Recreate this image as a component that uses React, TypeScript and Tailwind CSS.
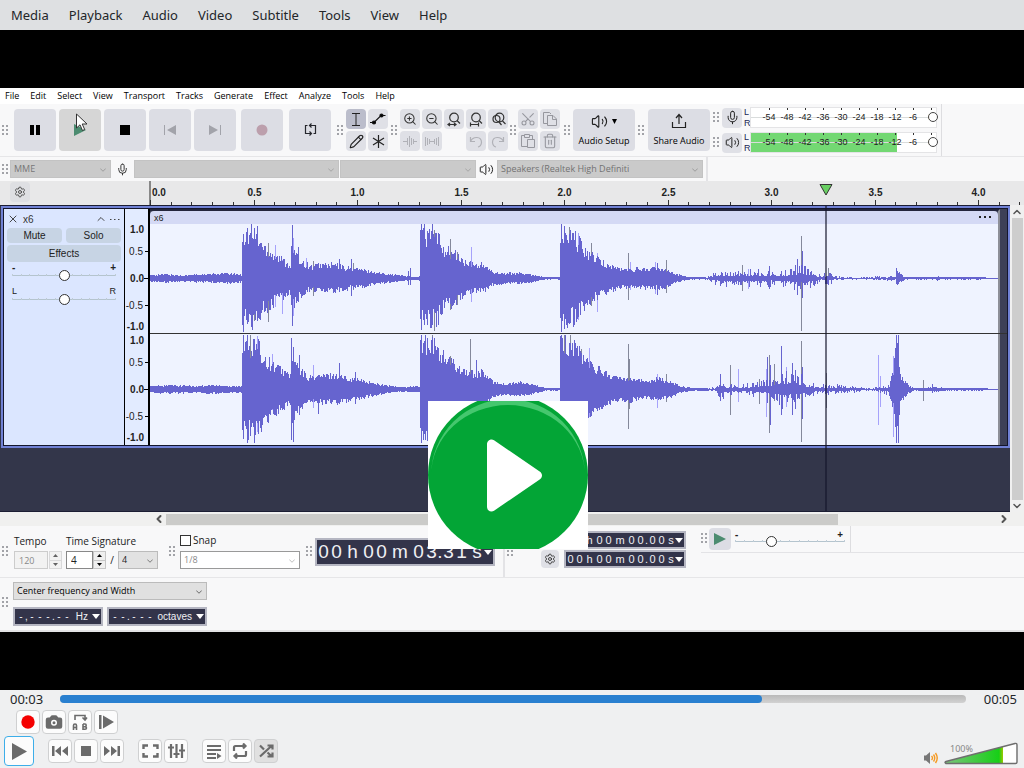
import type { ReactNode } from "react"
import {
    Camera,
    ChevronDown,
    ChevronLeft,
    ChevronRight,
    ChevronUp,
    Mic,
    Pencil,
    Scissors,
    Settings,
    Trash2,
    Volume2,
    X,
    ZoomIn,
    ZoomOut,
} from "lucide-react"

type Point = [number, number]
type Spike = [number, number, number, string?]

const BLUE = "#6664cf"
const GRAY = "#84889b"
const LIGHT = "#a6a2fb"

// [x, amplitude] pairs, in pixels from the start of the clip
const LEFT_ENVELOPE: Point[] = [
    [0, 3], [15, 4], [30, 3], [60, 4], [75, 5], [90, 4], [91, 3], [92, 46], [106, 47], [110, 38], [115, 32],
    [125, 24], [140, 14], [141, 30], [144, 30], [146, 22], [160, 12], [170, 14], [185, 14], [195, 11], [210, 9],
    [225, 6], [240, 4], [250, 3], [265, 1], [269, 2], [270, 46], [286, 44], [295, 30],
    [305, 25], [315, 16], [325, 14], [333, 14], [340, 7], [355, 5], [370, 5], [385, 3], [395, 1], [409, 1],
    [410, 46], [425, 42], [435, 29], [450, 17], [465, 11], [475, 9], [490, 10], [510, 10], [518, 9], [525, 4],
    [540, 1], [555, 1], [562, 4], [570, 8], [590, 7], [605, 9], [615, 9], [625, 6], [635, 8], [645, 13],
    [655, 12], [662, 8], [670, 3], [678, 7], [685, 2], [710, 1], [740, 2], [745, 1], [747, 8], [750, 4],
    [755, 1], [785, 1], [787, 2], [790, 1], [830, 1], [848, 0],
]
const LEFT_SPIKES: Spike[] = [
    [93, 44, 54], [97, 50, 46], [101, 54, 48], [104, 49, 43, GRAY], [107, 52, 41], [118, 35, 44, GRAY], [125, 33, 29, LIGHT],
    [132, 18, 36, LIGHT], [142, 53, 48], [143, 40, 38, LIGHT], [148, 31, 22], [156, 20, 12, LIGHT], [163, 17, 18, GRAY],
    [189, 19, 14], [201, 19, 18], [203, 15, 12, GRAY], [258, 7, 7], [260, 10, 7], [271, 54, 52], [274, 54, 47], [282, 54, 40],
    [284, 48, 53, GRAY], [300, 39, 32, GRAY], [307, 26, 27, GRAY], [321, 31, 24, LIGHT], [411, 54, 54], [414, 52, 47],
    [419, 51, 43, GRAY], [428, 45, 42, LIGHT], [441, 35, 28, GRAY], [447, 25, 34, LIGHT], [478, 25, 22, GRAY], [480, 16, 12, LIGHT],
    [505, 16, 16, LIGHT], [507, 15, 17], [516, 18, 15, GRAY], [592, 13, 13, GRAY], [598, 9, 11, LIGHT], [619, 12, 11],
    [647, 19, 17], [651, 42, 53, GRAY], [652, 27, 20], [678, 10, 5, GRAY], [746, 10, 6],
]
const RIGHT_ENVELOPE: Point[] = [
    [0, 3], [20, 4], [45, 3], [60, 4], [90, 3], [91, 3], [92, 44], [106, 48], [112, 36], [120, 27], [132, 20],
    [141, 14], [142, 38], [144, 30], [150, 20], [158, 12], [170, 14], [185, 15], [195, 12], [205, 10], [220, 7],
    [235, 4], [250, 2], [269, 3], [270, 46], [285, 46], [295, 32], [305, 26], [315, 19], [325, 16], [332, 18],
    [342, 8], [355, 5], [370, 7], [385, 4], [395, 1], [409, 1], [410, 48], [424, 48], [435, 31], [450, 20],
    [465, 12], [480, 12], [495, 8], [508, 11], [520, 8], [530, 3], [545, 1], [565, 2], [571, 11], [575, 5],
    [590, 4], [603, 7], [612, 8], [625, 13], [630, 20], [640, 18], [650, 15], [656, 8], [665, 5], [680, 5],
    [700, 3], [720, 1], [735, 4], [739, 6], [743, 20], [746, 54], [748, 52], [750, 14], [757, 5], [763, 1],
    [787, 2], [795, 1], [830, 1], [848, 0],
]
const RIGHT_SPIKES: Spike[] = [
    [93, 54, 50], [97, 54, 54], [100, 54, 46, GRAY], [107, 53, 43, LIGHT], [118, 22, 30], [122, 35, 21, LIGHT],
    [141, 51, 51], [143, 42, 53], [149, 34, 26], [163, 24, 19, LIGHT], [168, 12, 25], [189, 26, 15], [205, 17, 15],
    [271, 54, 54], [275, 54, 51], [282, 54, 44, GRAY], [300, 33, 30, GRAY], [320, 50, 28, GRAY], [326, 29, 20],
    [411, 54, 54], [414, 54, 44, GRAY], [420, 54, 43, GRAY], [431, 40, 32, GRAY], [439, 41, 28, LIGHT], [478, 45, 40, GRAY],
    [479, 30, 20, GRAY], [507, 15, 19, LIGHT], [516, 15, 13, GRAY], [570, 15, 12], [580, 24, 26, GRAY], [588, 20, 13, LIGHT],
    [609, 10, 15, GRAY], [616, 20, 28, LIGHT], [617, 32, 14], [619, 34, 44, GRAY], [620, 24, 36], [624, 25, 12, GRAY], [631, 43, 26],
    [636, 22, 18, LIGHT], [642, 26, 26], [645, 19, 20], [651, 48, 53, GRAY], [652, 22, 30], [676, 16, 19, GRAY],
    [728, 34, 36, LIGHT], [730, 13, 18, LIGHT], [743, 33, 48, LIGHT], [746, 54, 54], [748, 54, 54], [773, 9, 12, GRAY], [782, 5, 4],
]

function noise(n: number) {
    const v = Math.sin(n * 127.1) * 43758.5453
    return v - Math.floor(v)
}

function amplitudeAt(points: Point[], x: number) {
    const next = points.findIndex((p) => p[0] >= x)
    if (next <= 0) return points[0][1]
    const [x0, a0] = points[next - 1]
    const [x1, a1] = points[next]
    return a0 + ((a1 - a0) * (x - x0)) / (x1 - x0)
}

// the tail of the clip is quiet speech, far more jagged than the hits before it
function jitter(x: number, n: number) {
    return x > 555 && x < 740 ? 0.25 + 0.9 * n * n : 0.65 + 0.5 * n
}

function barsPath(points: Point[], seed: number) {
    let d = ""
    for (let x = 0; x < 848; x++) {
        const a = amplitudeAt(points, x)
        const up = Math.min(54, a * jitter(x, noise(x + seed)))
        const down = Math.min(54, a * jitter(x, noise(x * 3 + seed + 9)))
        d += `M${x + 0.5} ${(55 - up).toFixed(1)}V${(55.5 + down).toFixed(1)}`
    }
    return d
}

interface WaveformProps {
    points: Point[]
    spikes: Spike[]
    seed: number
    top: number
    height: number
}

function Waveform({ points, spikes, seed, top, height }: WaveformProps) {
    return (
        <svg width="848" height={height} viewBox={`0 ${top} 848 ${height}`} className="block bg-[#eff3ff]" shapeRendering="crispEdges">
            {spikes.map(([x, up, down, color]) => (
                <path key={x} d={`M${x + 0.5} ${55 - up}V${55 + down}`} stroke={color ?? BLUE} />
            ))}
            <path d={barsPath(points, seed)} stroke={BLUE} />
            <path d="M0 55.5H848" stroke={BLUE} strokeOpacity=".7" />
        </svg>
    )
}

function Grip({ className = "" }: { className?: string }) {
    return (
        <svg width="6" height="11" viewBox="0 0 6 11" fill="#a2a3a8" className={`shrink-0 ${className}`}>
            <path d="M0 0h2v2H0zM4 0h2v2H4zM0 4h2v2H0zM4 4h2v2H4zM0 8h2v2H0zM4 8h2v2H4z" />
        </svg>
    )
}

interface ButtonProps {
    label: string
    children?: ReactNode
    className?: string
}

function BigButton({ label, children, className = "bg-[#dcdde4]" }: ButtonProps) {
    return (
        <button aria-label={label} className={`flex h-[42px] w-[42px] shrink-0 items-center justify-center rounded-sm ${className}`}>
            {children}
        </button>
    )
}

function SmallButton({ label, children, className = "bg-[#dfe0e6]" }: ButtonProps) {
    return (
        <button aria-label={label} className={`flex h-5 w-5 shrink-0 items-center justify-center rounded-sm ${className}`}>
            {children}
        </button>
    )
}

interface ComboProps {
    label: string
    value: string
    className: string
}

function Combo({ label, value, className }: ComboProps) {
    return (
        <div className={`relative h-[18px] shrink-0 border text-[9px] ${className}`}>
            <select aria-label={label} className="block h-full w-full appearance-none truncate bg-transparent pl-[3px] pr-3 leading-4">
                <option>{value}</option>
            </select>
            <ChevronDown size={10} strokeWidth={1.8} className="pointer-events-none absolute top-1 right-0.5 opacity-70" />
        </div>
    )
}

function Slider({ label, value, className }: { label: string; value: number; className: string }) {
    return (
        <div className={`relative h-3 ${className}`}>
            <div className="flex h-1.5 justify-between border-b border-[#b4c4ce] pt-1">
                {Array.from({ length: 13 }, (_, i) => (
                    <i key={i} className="h-0.5 w-px bg-[#bfccd6]" />
                ))}
            </div>
            <i className="absolute top-0 -ml-[5px] h-[11px] w-[11px] rounded-full border border-[#333] bg-white" style={{ left: `${value}%` }} />
            <input type="range" aria-label={label} defaultValue={value} className="absolute inset-0 h-full w-full opacity-0" />
        </div>
    )
}

function TransportToolbar() {
    return (
        <div className="flex items-center">
            <Grip className="ml-0.5" />
            <div className="ml-1.5 flex gap-[3px]">
                <BigButton label="Pause">
                    <svg width="10" height="10"><path d="M0 0h4v10H0zM6 0h4v10H6z" /></svg>
                </BigButton>
                <BigButton label="Play" className="bg-[#d6d6d6]">
                    <svg width="12" height="12" fill="#4c8c70"><path d="M0 0L12 6L0 12z" /></svg>
                </BigButton>
                <BigButton label="Stop">
                    <svg width="10" height="10"><path d="M0 0h10v10H0z" /></svg>
                </BigButton>
                <BigButton label="Skip to start">
                    <svg width="12" height="10" fill="#a2a3aa"><path d="M0 0h1v10H0zM12 0v10L3 5z" /></svg>
                </BigButton>
                <BigButton label="Skip to end">
                    <svg width="12" height="10" fill="#a2a3aa"><path d="M11 0h1v10h-1zM0 0v10l9-5z" /></svg>
                </BigButton>
            </div>
            <div className="ml-[5px] flex gap-1.5">
                <BigButton label="Record">
                    <svg width="12" height="12" fill="#bc9fac"><circle cx="6" cy="6" r="5.5" /></svg>
                </BigButton>
                <BigButton label="Loop">
                    <svg width="13" height="14" fill="none" stroke="#26272d" strokeWidth="1.2">
                        <path d="M3.500 2.500H1.500V10.500H7M5.500 2.500H11.500V10.500H9.500M7.500 .5L5.500 2.500L7.500 4.500M5.500 8.500L7.500 10.500L5.500 12.500" />
                    </svg>
                </BigButton>
            </div>
        </div>
    )
}

function ToolButtons() {
    return (
        <div className="ml-[3px] grid grid-cols-2 gap-0.5">
            <SmallButton label="Selection tool" className="bg-[#bbbdcb]">
                <svg width="10" height="15" fill="none" stroke="#222"><path d="M1 1.500h8M1 13.500h8M5 1.500v12" /></svg>
            </SmallButton>
            <SmallButton label="Envelope tool">
                <svg width="16" height="14" stroke="#111" strokeWidth="1.200">
                    <path d="M0 10.500h4L11 3.500h4.500" fill="none" />
                    <circle cx="4" cy="10.500" r="1.500" />
                    <circle cx="11.500" cy="3.500" r="1.500" />
                </svg>
            </SmallButton>
            <SmallButton label="Draw tool"><Pencil size={15} strokeWidth={1.8} color="#222" /></SmallButton>
            <SmallButton label="Multi tool">
                <svg width="13" height="13" stroke="#222" strokeWidth="1.200"><path d="M6.500 0v13M1 3l11 7M12 3L1 10" /></svg>
            </SmallButton>
        </div>
    )
}

function FitIcon({ d }: { d: string }) {
    return (
        <svg width="14" height="15" viewBox="0 0 14 15" fill="none" stroke="#333" strokeWidth="1.200">
            <circle cx="7" cy="5.500" r="4.300" />
            <path d={d} />
        </svg>
    )
}

function ZoomButtons() {
    return (
        <div className="ml-[3px] grid grid-cols-5 gap-0.5">
            <SmallButton label="Zoom in"><ZoomIn size={14} strokeWidth={1.8} color="#333" /></SmallButton>
            <SmallButton label="Zoom out"><ZoomOut size={14} strokeWidth={1.8} color="#333" /></SmallButton>
            <SmallButton label="Fit selection"><FitIcon d="M10 8.500l3 3M1 12.500h8M3 11l-2 1.500l2 1.500M7 11l2 1.500l-2 1.500" /></SmallButton>
            <SmallButton label="Fit project"><FitIcon d="M10 8.500l3 3M1 12.500h8M1.500 10.500v4M9.500 10.500v4" /></SmallButton>
            <SmallButton label="Zoom toggle">
                <svg width="15" height="14" fill="none" stroke="#333" strokeWidth="1.200">
                    <circle cx="8.500" cy="5.500" r="4.300" />
                    <circle cx="5.500" cy="7" r="3.500" />
                    <path d="M8 10l2.500 3M11.500 9l3 3" />
                </svg>
            </SmallButton>
            <SmallButton label="Trim audio">
                <svg width="14" height="11" stroke="#b0b1b7"><path d="M0 5.500h4M4.500 2v7M6.500 0v11M8.500 2v7M10.500 3v5M11 5.500h3" /></svg>
            </SmallButton>
            <SmallButton label="Silence audio">
                <svg width="14" height="11" stroke="#b0b1b7"><path d="M.5 1v9M2.500 2v7M4.500 3v5M5 5.500h4M9.500 3v5M11.500 2v7M13.500 1v9" /></svg>
            </SmallButton>
            <span />
            <SmallButton label="Undo">
                <svg width="14" height="13" fill="none" stroke="#b0b1b7" strokeWidth="1.200"><path d="M1.500 2v4.500H6M1.500 6.500C4 1 12.500 1 12.500 7.500Q12 11.500 9 12" /></svg>
            </SmallButton>
            <SmallButton label="Redo">
                <svg width="14" height="13" fill="none" stroke="#b0b1b7" strokeWidth="1.200"><path d="M12.500 2v4.500H8M12.500 6.500C10 1 1.500 1 1.500 7.500Q2 11.500 5 12" /></svg>
            </SmallButton>
        </div>
    )
}

function EditButtons() {
    return (
        <div className="ml-0.5 grid grid-cols-2 gap-0.5">
            <SmallButton label="Cut"><Scissors size={16} strokeWidth={1.6} color="#96979e" className="-rotate-90" /></SmallButton>
            <SmallButton label="Copy">
                <svg width="16" height="16" fill="none" stroke="#96979e"><path d="M5.500 12.500H1.500V1.500H7.500L9 3M5.500 4.500H11L14.500 8V14.500H5.500zM10.500 4.500V8.500H14.500" /></svg>
            </SmallButton>
            <SmallButton label="Paste">
                <svg width="16" height="16" fill="none" stroke="#96979e"><path d="M7 13.500H1.500V2.500H4.500M9.500 2.500H12.500V6M4.500 1.500H9.500V4.500H4.500zM7.500 6.500H14.500V14.500H7.500z" /></svg>
            </SmallButton>
            <SmallButton label="Delete"><Trash2 size={16} strokeWidth={1.6} color="#96979e" /></SmallButton>
        </div>
    )
}

const levels = ["-54", "-48", "-42", "-36", "-30", "-24", "-18", "-12", "-6", "0"]

function Meter({ label, level, icon }: { label: string; level: number; icon: ReactNode }) {
    return (
        <div className="flex h-[23px] items-center">
            <Grip />
            <SmallButton label={label} className="ml-[3px] bg-[#dfe0e6]">{icon}</SmallButton>
            <div className="ml-0.5 w-1.5 font-['Liberation_Sans',sans-serif] text-[9px] leading-[11px] text-[#222a55]">
                <div>L</div>
                <div>R</div>
            </div>
            <div className="relative h-[21px] w-[187px] border border-[#e4e4e6] bg-white">
                <div className="absolute inset-y-0 left-0 bg-[#73d873]" style={{ width: `${level}%` }} />
                <div className="absolute inset-x-0 top-[9px] h-px bg-[#d9dcdc]" />
                <div className="relative flex pl-[9px] font-['Liberation_Sans',sans-serif] text-[9px] leading-[14px] text-[#222]">
                    {levels.map((db) => (
                        <div key={db} className="flex w-[18px] shrink-0 flex-col items-center">
                            <i className="h-0.5 w-px bg-[#333]" />
                            <span>{db}</span>
                        </div>
                    ))}
                </div>
                <i className="absolute top-1 -right-0.5 h-2.5 w-2.5 rounded-full border border-[#444] bg-white" />
            </div>
        </div>
    )
}

function Toolbars() {
    return (
        <div className="flex h-[53px] items-center overflow-hidden border-b border-[#e6e6e8]">
            <TransportToolbar />
            <Grip className="ml-1.5" />
            <ToolButtons />
            <Grip className="ml-[3px]" />
            <ZoomButtons />
            <Grip className="ml-0.5" />
            <EditButtons />
            <Grip className="ml-1" />
            <button className="ml-[3px] flex h-[42px] w-[62px] shrink-0 flex-col items-center justify-between rounded-sm bg-[#dcdde4] pt-1 pb-1 text-[9px] leading-3 text-black">
                <span className="flex items-center gap-1">
                    <Volume2 size={17} strokeWidth={1.600} color="#222" />
                    <svg width="5" height="5"><path d="M0 0h5L2.500 5z" /></svg>
                </span>
                Audio Setup
            </button>
            <Grip className="ml-[3px]" />
            <button className="ml-1 flex h-[42px] w-[62px] shrink-0 flex-col items-center justify-between rounded-sm bg-[#dcdde4] pt-1 pb-1 text-[9px] leading-3 text-black">
                <svg width="16" height="16" fill="none" stroke="#222" strokeWidth="1.200">
                    <path d="M1.500 9v5.500h13V9M8 11V2M5 5l3-3.500L11 5" />
                </svg>
                Share Audio
            </button>
            <div className="ml-[3px] flex h-full flex-col justify-around border-r border-[#dddde0] py-px pr-1">
                <Meter label="Record meter" level={0} icon={<Mic size={15} strokeWidth={1.600} color="#222" />} />
                <Meter label="Playback meter" level={79} icon={<Volume2 size={15} strokeWidth={1.600} color="#222" />} />
            </div>
        </div>
    )
}

function DeviceToolbar() {
    return (
        <div className="flex h-6 items-center">
            <Grip className="ml-0.5" />
            <Combo label="Host" value="MME" className="ml-0.5 w-[101px] border-[#c3c3c3] bg-[#cacaca] text-[#777]" />
            <Mic size={13} strokeWidth={1.800} color="#333" className="mx-[5px] shrink-0" />
            <Combo label="Recording device" value="" className="w-[205px] border-[#c3c3c3] bg-[#cacaca] text-[#888]" />
            <Combo label="Recording channels" value="" className="ml-px w-[136px] border-[#c3c3c3] bg-[#cacaca] text-[#888]" />
            <Volume2 size={15} strokeWidth={1.600} color="#222" className="mx-[3px] shrink-0" />
            <Combo label="Playback device" value="Speakers (Realtek High Definiti" className="w-[206px] border-[#c3c3c3] bg-[#cacaca] text-[#727272]" />
            <i className="ml-[3px] h-full w-0.5 border-x border-[#e3e3e6]" />
        </div>
    )
}

function Timeline() {
    const marks = ["0.5", "1.0", "1.5", "2.0", "2.5", "3.0", "3.5", "4.0"]
    return (
        <div className="relative flex h-6 overflow-hidden bg-[#e8e8e9] font-['Liberation_Sans',sans-serif] font-bold text-[#222]">
            <div className="w-[149px] shrink-0 pt-px pl-2.5">
                <button aria-label="Timeline options" className="flex h-5 w-5 items-center justify-center rounded-sm bg-[#dedfe3]">
                    <Settings size={12} strokeWidth={1.800} color="#444" />
                </button>
            </div>
            <div className="w-[53px] shrink-0 border-l-2 border-[#888] pl-px leading-[23px]">0.0</div>
            {marks.map((mark) => (
                <div key={mark} className="w-[103px] shrink-0 text-center leading-[23px] odd:ml-px">{mark}</div>
            ))}
            <svg width="880" height="5" stroke="#333" className="absolute bottom-0 left-[150px]" shapeRendering="crispEdges">
                {Array.from({ length: 43 }, (_, i) => (
                    <path key={i} d={`M${Math.round(i * 20.7) + 0.5} ${i % 5 ? 2 : 0}V5`} />
                ))}
            </svg>
            <svg width="14" height="12" className="absolute top-[3px] left-[819px]">
                <path d="M1 .5h12L7 11z" fill="#69cf63" stroke="#333" />
            </svg>
        </div>
    )
}

function TrackPanel() {
    return (
        <div className="flex w-[120px] shrink-0 flex-col bg-[#dbe6ff] px-[3px] pt-1">
            <div className="flex h-3 items-center text-[#333]">
                <X size={12} strokeWidth={1.800} />
                <span className="ml-1">x6</span>
                <ChevronUp size={12} strokeWidth={1.800} className="ml-auto" />
                <svg width="12" height="3" fill="#444" className="ml-0.5"><path d="M1 1h1.500v1H1zM5 1h1.500v1H5zM9 1h1.500v1H9z" /></svg>
            </div>
            <div className="mt-[3px] flex gap-1">
                <button className="h-[15px] flex-1 rounded-sm bg-[#c7d4e4]">Mute</button>
                <button className="h-[15px] flex-1 rounded-sm bg-[#c7d4e4]">Solo</button>
            </div>
            <button className="mt-0.5 h-[17px] rounded-sm bg-[#c7d4e4]">Effects</button>
            <div className="flex h-2 justify-between px-[5px] pt-0.5 leading-2"><b>-</b><b>+</b></div>
            <Slider label="Gain" value={50} className="mx-[5px]" />
            <div className="mt-[5px] flex h-[7px] justify-between px-[5px] text-[9px] leading-2"><span>L</span><span>R</span></div>
            <Slider label="Pan" value={50} className="mx-[5px]" />
        </div>
    )
}

function AmplitudeRuler() {
    return (
        <div className="flex h-[110px] flex-col text-right">
            <div className="h-3 pr-1 leading-3 font-bold">1.0</div>
            <div className="flex h-[30px] items-center justify-end gap-0.5">0.5<i className="h-px w-[3px] bg-black" /></div>
            <div className="flex h-6 items-center justify-end font-bold">0.0<i className="h-px w-1 bg-black" /></div>
            <div className="flex h-[30px] items-center justify-end gap-0.5">-0.5<i className="h-px w-[3px] bg-black" /></div>
            <div className="h-3.5 pr-1 leading-[13px] font-bold">-1.0</div>
        </div>
    )
}

function Track() {
    return (
        <div className="ml-px border-2 border-[#7081d4] font-['Liberation_Sans',sans-serif] text-[#222]">
            <div className="flex h-[238px] border border-[#14162c] bg-[#3d4056]">
                <TrackPanel />
                <div className="flex w-[26px] shrink-0 flex-col gap-px border-r-2 border-l border-black bg-[#e2ebff] pt-[15px]">
                    <AmplitudeRuler />
                    <AmplitudeRuler />
                </div>
                <div className="w-[850px] shrink-0 border-t-2 border-r-2 border-t-[#23253c] border-r-[#8d8f98]">
                    <div className="flex h-[13px] items-center rounded-t bg-[#d4d9f5] pr-1.5 pl-1 text-[9px] leading-3">
                        <span>x6</span>
                        <svg width="13" height="3" className="ml-auto"><path d="M0 0h2v2H0zM5 0h2v2H5zM10 0h2v2h-2z" fill="#222" /></svg>
                    </div>
                    <Waveform points={LEFT_ENVELOPE} spikes={LEFT_SPIKES} seed={3} top={1} height={109} />
                    <div className="h-px w-[857px] bg-[#333]" />
                    <Waveform points={RIGHT_ENVELOPE} spikes={RIGHT_SPIKES} seed={41} top={0} height={111} />
                </div>
            </div>
        </div>
    )
}

function TrackArea() {
    return (
        <>
            <div className="flex h-[307px] bg-[#f0f0f0]">
                <div className="relative min-w-0 flex-1 overflow-hidden border-y border-[#1b1d33] bg-[#33364a]">
                    <Track />
                    <i className="absolute top-0 left-[825px] h-full w-0.5 bg-[#14162c]/60" />
                </div>
                <div className="flex w-3.5 flex-col items-center pt-px">
                    <ChevronUp size={12} strokeWidth={3} color="#555" />
                    <i className="w-[11px] flex-1 bg-[#cdcdcd]" />
                    <ChevronDown size={12} strokeWidth={3} color="#555" />
                </div>
            </div>
            <div className="flex h-3.5 items-center bg-[#f0f0ef] pr-3.5 pl-[153px]">
                <ChevronLeft size={12} strokeWidth={4} color="#555" />
                <div className="mr-0.5 ml-px flex-1">
                    <div className="h-[11px] w-[81%] bg-[#cbcbc9]" />
                </div>
                <ChevronRight size={12} strokeWidth={4} color="#555" />
            </div>
        </>
    )
}

function Stepper({ dim = false }: { dim?: boolean }) {
    return (
        <div className={`flex h-[18px] w-[13px] flex-col border border-[#c6c6c6] bg-[#efefef] ${dim ? "opacity-60" : ""}`}>
            <button aria-label="Increase" className="flex flex-1 items-center justify-center border-b border-[#c6c6c6]">
                <svg width="5" height="3"><path d="M0 3h5L2.500 0z" /></svg>
            </button>
            <button aria-label="Decrease" className="flex flex-1 items-center justify-center">
                <svg width="5" height="3"><path d="M0 0h5L2.500 3z" /></svg>
            </button>
        </div>
    )
}

const bigCells: Record<string, string> = { " ": "w-1", ".": "w-1", h: "w-[11px]", m: "w-4", s: "w-2.5" }
const smallCells: Record<string, string> = { " ": "w-px", ".": "w-[3px]", h: "w-[9px]", m: "w-3", s: "w-2" }

function TimeDisplay({ value, big = false }: { value: string; big?: boolean }) {
    const cells = big ? bigCells : smallCells
    return (
        <div className={`flex shrink-0 items-center border-2 border-[#b5b6c2] bg-[#33344a] font-['Liberation_Sans',sans-serif] text-[#f0f0f4] ${big ? "h-7 w-[180px] text-[19px]" : "h-[18px] w-[122px] text-[11px]"}`}>
            {value.split("").map((char, i) => (
                <span key={i} className={`flex shrink-0 justify-center ${cells[char] ?? (big ? "w-[13px]" : "w-[9px]")}`}>{char}</span>
            ))}
            <svg width="8" height="5" fill="white" className="mr-px ml-auto"><path d="M0 0h8L4 5z" /></svg>
        </div>
    )
}

function SpectralBox({ value, unit, className }: { value: string; unit: string; className: string }) {
    return (
        <button className={`flex h-[19px] items-center border-2 border-[#b5b6c2] bg-[#33344a] pr-px pl-0.5 font-['Liberation_Sans',sans-serif] text-[10px] text-[#f0f0f4] ${className}`}>
            {value.split("").map((char, i) => (
                <span key={i} className={char === "-" ? "w-2" : "w-[3px]"}>{char}</span>
            ))}
            <span className="ml-auto">{unit}</span>
            <svg width="8" height="5" fill="white" className="ml-1"><path d="M0 0h8L4 5z" /></svg>
        </button>
    )
}

function BottomToolbars() {
    return (
        <>
            <div className="flex h-[52px] overflow-hidden border-b border-[#e6e6e8]">
                <Grip className="mt-5 ml-0.5" />
                <div className="ml-1.5 flex w-[52px] shrink-0 flex-col pt-2">
                    <label htmlFor="tempo" className="h-[17px] leading-[14px]">Tempo</label>
                    <div className="flex gap-px">
                        <input id="tempo" disabled defaultValue="120" className="h-[18px] w-[34px] border border-[#ccc] bg-[#f2f2f2] pl-1 text-[9px] text-[#888]" />
                        <Stepper dim />
                    </div>
                </div>
                <div className="flex w-[97px] shrink-0 flex-col pt-2">
                    <label htmlFor="beats" className="h-[17px] leading-[14px]">Time Signature</label>
                    <div className="flex">
                        <input id="beats" defaultValue="4" className="h-[18px] w-[27px] border border-[#888] bg-white pl-1" />
                        <Stepper />
                        <span className="w-3 text-center leading-[18px]">/</span>
                        <Combo label="Beat unit" value="4" className="w-10 border-[#bbb] bg-[#e2e2e2]" />
                    </div>
                </div>
                <Grip className="mt-5 ml-1.5" />
                <div className="ml-[5px] w-[120px] shrink-0 pt-[7px]">
                    <label className="flex h-[18px] items-start gap-0.5 leading-[14px]">
                        <input type="checkbox" className="mt-0.5 h-[11px] w-[11px] appearance-none border border-[#333] bg-white" />
                        Snap
                    </label>
                    <Combo label="Snap to" value="1/8" className="border-[#999] bg-white text-[#888]" />
                </div>
                <Grip className="mt-5 ml-1.5" />
                <div className="ml-[3px] shrink-0 pt-3"><TimeDisplay value="00 h 00 m 03.31 s" big /></div>
                <i className="ml-2 w-0.5 shrink-0 border-x border-[#e3e3e6]" />
                <Grip className="mt-5 ml-0.5" />
                <div className="ml-7 shrink-0 pt-6">
                    <button aria-label="Selection options" className="flex h-[18px] w-[18px] items-center justify-center rounded-sm bg-[#dfe0e6]">
                        <Settings size={12} strokeWidth={1.800} color="#333" />
                    </button>
                </div>
                <div className="ml-[5px] flex shrink-0 flex-col gap-px pt-[5px]">
                    <TimeDisplay value="00 h 00 m 00.00 s" />
                    <TimeDisplay value="00 h 00 m 00.00 s" />
                </div>
                <div className="ml-[15px] flex h-[27px] flex-1 border-b border-[#e3e3e6]">
                    <Grip className="mt-[7px]" />
                    <button aria-label="Play at speed" className="mt-0.5 ml-0.5 flex h-[22px] w-[22px] items-center justify-center rounded-sm bg-[#dcdde4]">
                        <svg width="12" height="12" fill="#4c8c70"><path d="M0 0L12 6L0 12z" /></svg>
                    </button>
                    <div className="ml-1 w-[110px] pt-1">
                        <div className="flex justify-between pr-0.5 leading-[8px] font-bold"><span>-</span><span>+</span></div>
                        <Slider label="Speed" value={33} className="-mt-0.5" />
                    </div>
                    <i className="ml-[5px] w-px bg-[#dddde0]" />
                </div>
            </div>
            <div className="flex h-[54px] border-b-2 border-[#e2e2e4]">
                <Grip className="mt-[19px] ml-0.5" />
                <div className="ml-[5px] flex w-[194px] flex-col gap-[7px] pt-1">
                    <Combo label="Spectral selection" value="Center frequency and Width" className="border-[#bbb] bg-[#e0e0e0] text-black" />
                    <div className="flex gap-1">
                        <SpectralBox value="-,---.--" unit="Hz" className="w-[90px]" />
                        <SpectralBox value="--.---" unit="octaves" className="w-[100px]" />
                    </div>
                </div>
            </div>
        </>
    )
}

function PlayBadge() {
    return (
        <button aria-label="Play video" className="absolute top-[313px] left-[428px] bg-white">
            <svg width="160" height="148" viewBox="0 0 160 148" className="block">
                <circle cx="80" cy="74" r="80" fill="#03a536" />
                <path d="M3 75A77 77 0 0 1 157 75A77 71 0 0 0 3 75Z" fill="#45c76e" />
                <path d="M63.500 43V106L109.500 74.500Z" fill="white" stroke="white" strokeWidth="9" strokeLinejoin="round" />
            </svg>
        </button>
    )
}

const editorMenu = ["File", "Edit", "Select", "View", "Transport", "Tracks", "Generate", "Effect", "Analyze", "Tools", "Help"]

function AudioEditor() {
    return (
        <div className="relative w-full overflow-hidden bg-[#f8f8f9] font-['Open_Sans',sans-serif] text-[10px] text-[#222]">
            <nav className="flex h-4 items-center gap-[11px] bg-white pl-[5px] text-[9px] text-black">
                {editorMenu.map((item) => <button key={item}>{item}</button>)}
            </nav>
            <Toolbars />
            <DeviceToolbar />
            <Timeline />
            <TrackArea />
            <BottomToolbars />
            <svg width="12" height="19" viewBox="0 0 12 19" className="absolute top-[25px] left-[76px]">
                <path d="M.5 1v14l3.500-3.200l2.500 5.700l2.200-1l-2.500-5.500H11z" fill="white" stroke="#333" />
            </svg>
            <PlayBadge />
        </div>
    )
}

function PlayerButton({ label, children, className = "bg-[#fcfcfc]" }: ButtonProps) {
    return (
        <button aria-label={label} className={`flex h-6 w-6 items-center justify-center rounded border border-[#cfd0d1] text-[#6b6b6b] ${className}`}>
            {children}
        </button>
    )
}

function PlayerControls() {
    return (
        <footer className="h-[78px] bg-[#eff0f1] font-['Noto_Sans',sans-serif] text-[13px] text-[#232629]">
            <div className="flex h-5 items-center pr-[7px] pb-0.5 pl-2.5 leading-[18px]">
                <span className="w-[50px]">00:03</span>
                <div className="relative h-2 flex-1 overflow-hidden rounded bg-linear-to-b from-[#b9b9b9] to-[#d2d2d2]">
                    <div className="h-full w-[77.5%] rounded-r bg-[#2980d0]" />
                    <input type="range" aria-label="Position" defaultValue={77} className="absolute inset-0 h-full w-full opacity-0" />
                </div>
                <span className="w-[51px] text-right">00:05</span>
            </div>
            <div className="flex gap-0.5 pl-4">
                <PlayerButton label="Record"><svg width="14" height="14"><circle cx="7" cy="7" r="6.700" fill="#f40000" /></svg></PlayerButton>
                <PlayerButton label="Take a snapshot"><Camera size={18} fill="#6b6b6b" stroke="#6b6b6b" className="[&_circle]:fill-[#6b6b6b] [&_circle]:stroke-white" /></PlayerButton>
                <PlayerButton label="Loop from A to B">
                    <svg width="16" height="16" fill="none" stroke="currentColor" strokeWidth="1.600">
                        <path d="M3 6V1.500H13V5M10.500 3.500L13 6L15 3.500M1.500 16V11.500Q1.500 10 3 10T4.500 11.500V16M1.500 13.500h3M11 10h2q1.200 0 1.200 1.300T13 12.800h-2M13 12.800q1.500 0 1.500 1.200T13 15.200h-2V10" />
                    </svg>
                </PlayerButton>
                <PlayerButton label="Frame by frame"><svg width="15" height="14" fill="currentColor"><path d="M0 0h2.500v14H0zM4 0.500v13L15 7z" /></svg></PlayerButton>
            </div>
            <div className="mt-0.5 flex items-center pr-1.5 pl-1">
                <button aria-label="Play" className="flex h-[30px] w-[30px] items-center justify-center rounded border border-[#3daee9] bg-[#fcfcfc]">
                    <svg width="15" height="17" fill="#6b6b6b"><path d="M0 0v17L15 8.500z" /></svg>
                </button>
                <div className="ml-3.5 flex gap-0.5">
                    <PlayerButton label="Previous"><svg width="16" height="12" fill="currentColor"><path d="M0 1h2.500v10H0zM9 1v10L3 6zM16 1v10l-6-5z" /></svg></PlayerButton>
                    <PlayerButton label="Stop"><svg width="10" height="10" fill="currentColor"><path d="M0 0h10v10H0z" /></svg></PlayerButton>
                    <PlayerButton label="Next"><svg width="16" height="12" fill="currentColor"><path d="M13.500 1H16v10h-2.500zM0 1v10l6-5zM7 1v10l6-5z" /></svg></PlayerButton>
                </div>
                <div className="ml-3.5 flex gap-0.5">
                    <PlayerButton label="Fullscreen"><svg width="17" height="14" fill="none" stroke="currentColor" strokeWidth="2.400"><path d="M1.500 5V1.500H6M11 1.500h4.500V5M15.500 9v3.500H11M6 12.500H1.500V9" /></svg></PlayerButton>
                    <PlayerButton label="Extended settings"><svg width="17" height="14" stroke="currentColor" strokeWidth="2.200"><path d="M3 0v14M8.500 0v14M14 0v14M0 3.500h6M5.500 10h6M11 6.500h6" /></svg></PlayerButton>
                </div>
                <div className="ml-3.5 flex gap-0.5">
                    <PlayerButton label="Playlist"><svg width="15" height="15" fill="currentColor"><path d="M0 1h14v2H0zM0 5h14v2H0zM0 9h9v2H0zM0 13h9v2H0zM10 9v6l4.500-3z" /></svg></PlayerButton>
                    <PlayerButton label="Loop"><svg width="16" height="16" fill="none" stroke="currentColor" strokeWidth="2.200"><path d="M2 8V4.500Q2 3 3.500 3H13M11 .5L13.500 3L11 5.500M14 8v3.500q0 1.500-1.500 1.500H3M5 10.500L2.500 13L5 15.500" /></svg></PlayerButton>
                    <PlayerButton label="Random" className="bg-[#e0e0e0]"><svg width="15" height="14" fill="none" stroke="currentColor" strokeWidth="2.200"><path d="M1 12.500L13 1.500M1 1.500l4 4M8.500 8.500l4.500 4M8.500 1.500H13.500V5.500M13.500 8.500v4h-5" /></svg></PlayerButton>
                </div>
                <button aria-label="Mute" className="mt-3.5 ml-auto">
                    <svg width="16" height="14" fill="none"><path d="M0 4.500h2l4-3.500v12l-4-3.500H0z" fill="#777" /><path d="M7.500 5q2 2 0 4M9.500 3.500q2.500 3.500 0 7M11.500 2q3.500 5 0 10" stroke="#f59a23" strokeWidth="1.400" /></svg>
                </button>
                <div className="relative mt-1 ml-1">
                    <svg width="74" height="24" viewBox="0 0 74 24" className="block">
                        <defs>
                            <linearGradient id="volume">
                                <stop offset="0" stopColor="#7cc47c" />
                                <stop offset=".93" stopColor="#17cf17" />
                                <stop offset="1" stopColor="#9ac800" />
                            </linearGradient>
                        </defs>
                        <path d="M1 22.500V21L72.500 2V22.500z" fill="white" />
                        <path d="M1 22.500V21L59 5.500V22.500z" fill="url(#volume)" />
                        <path d="M2 22.500Q0 21.500 2 20.500L71 2.500Q73 2 73 4V21q0 1.500-1.500 1.500z" fill="none" stroke="#6e6e6e" strokeWidth="1.400" />
                    </svg>
                    <span className="absolute top-0.5 left-1.5 text-[9px] leading-3 text-[#888]">100%</span>
                    <input type="range" aria-label="Volume" defaultValue={80} className="absolute inset-0 h-full w-full opacity-0" />
                </div>
            </div>
        </footer>
    )
}

const playerMenu = ["Media", "Playback", "Audio", "Video", "Subtitle", "Tools", "View", "Help"]

export default function App() {
    return (
        <div className="flex min-h-screen flex-col bg-black">
            <nav className="flex h-[30px] items-center gap-5 bg-[#dee0e2] px-[11px] pt-0.5 font-['Noto_Sans',sans-serif] text-[13px] text-[#232629]">
                {playerMenu.map((item) => <button key={item}>{item}</button>)}
            </nav>
            <main className="flex flex-1 items-center">
                <AudioEditor />
            </main>
            <PlayerControls />
        </div>
    )
}
